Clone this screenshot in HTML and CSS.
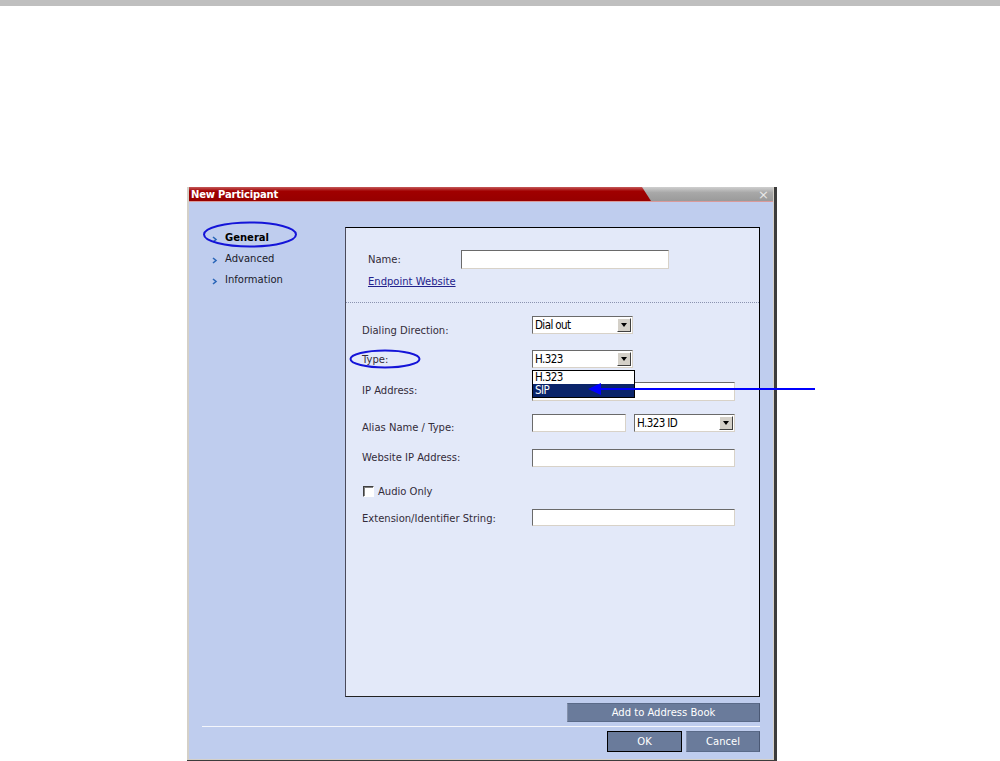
FILE: index.html
```html
<!DOCTYPE html>
<html lang="en">
<head>
  <meta charset="UTF-8" />
  <title>New Participant</title>
  <link rel="stylesheet" href="styles.css">
</head>
<body>
  <div class="barra-top"></div>

  <div class="dialogo">
    <div class="ventana">
      <div class="titulo">
        <div class="titulo-rojo">New Participant</div>
        <div class="titulo-gris"><span class="cerrar">×</span></div>
      </div>

      <div class="contenido">
        <div class="principal">
          <ul class="nav">
            <li class="activo"><span class="chev"></span>General</li>
            <li><span class="chev"></span>Advanced</li>
            <li><span class="chev"></span>Information</li>
          </ul>

          <div class="panel">
            <div class="seccion-nombre">
              <div class="fila-nombre">
                <label class="lbl-nombre">Name:</label>
                <div class="campo campo-nombre"></div>
              </div>
              <a class="enlace" href="#">Endpoint Website</a>
            </div>

            <div class="separador"></div>

            <div class="form">
              <div class="fila f-dial">
                <label>Dialing Direction:</label>
                <div class="combo"><span>Dial out</span><i class="flecha"></i></div>
              </div>
              <div class="fila f-type">
                <label>Type:</label>
                <div class="combo"><span>H.323</span><i class="flecha"></i>
                  <div class="lista">
                    <div class="opcion">H.323</div>
                    <div class="opcion sel">SIP</div>
                  </div>
                </div>
              </div>
              <div class="fila f-ip">
                <label>IP Address:</label>
                <div class="campo campo-largo"></div>
              </div>
              <div class="fila f-alias">
                <label>Alias Name / Type:</label>
                <div class="campo campo-alias"></div>
                <div class="combo combo-alias"><span>H.323 ID</span><i class="flecha"></i></div>
              </div>
              <div class="fila f-web">
                <label>Website IP Address:</label>
                <div class="campo campo-largo"></div>
              </div>
              <div class="fila f-audio">
                <span class="check"></span>
                <span>Audio Only</span>
              </div>
              <div class="fila f-ext">
                <label>Extension/Identifier String:</label>
                <div class="campo campo-largo campo-ext"></div>
              </div>
            </div>
          </div>
        </div>

        <div class="fila-add">
          <button class="btn btn-add">Add to Address Book</button>
        </div>
        <div class="linea"></div>
        <div class="fila-botones">
          <button class="btn btn-ok">OK</button>
          <button class="btn btn-cancel">Cancel</button>
        </div>
      </div>
    </div>
  </div>

  <!-- anotaciones -->
  <svg class="anot" width="1000" height="761" viewBox="0 0 1000 761">
    <ellipse cx="250" cy="234.5" rx="46" ry="12" fill="none" stroke="#1414d8" stroke-width="2"/>
    <ellipse cx="385" cy="359" rx="34.5" ry="8.5" fill="none" stroke="#1414d8" stroke-width="2"/>
    <line x1="598" y1="389" x2="815" y2="389" stroke="#0000ff" stroke-width="2"/>
    <polygon points="588,389 601,383 601,395" fill="#0000ff"/>
  </svg>
</body>
</html>
```

FILE: styles.css
```css
* {
  box-sizing: border-box;
  margin: 0;
  padding: 0;
}

body {
  background: #fff;
  font-family: "DejaVu Sans", Verdana, sans-serif;
  font-size: 10px;
  color: #332c3a;
  overflow: hidden;
}

.barra-top {
  height: 6px;
  background: #bfbfbf;
}

.dialogo {
  margin: 181px 0 0 187px;
  width: 590px;
  height: 576px;
  border-right: 3px solid #3c3c3c;
  border-bottom: 3px solid #3c3c3c;
}

.ventana {
  height: 100%;
  display: flex;
  flex-direction: column;
  background: #bfcdee;
  border-left: 2px solid #d4d0c8;
  border-right: 1px solid #d4d0c8;
  border-bottom: 1px solid #d4d0c8;
}

/* barra de titulo */
.titulo {
  display: flex;
  height: 15px;
  background: linear-gradient(#cfcfcf, #a8a8a8 40%, #9a9a9a);
  border-bottom: 1px solid #d99a9a;
}

.titulo-rojo {
  width: 462px;
  background: linear-gradient(#c55a5a, #a00000 30%, #960000);
  clip-path: polygon(0 0, 453px 0, 100% 100%, 0 100%);
  color: #fff;
  font-weight: bold;
  font-size: 10px;
  line-height: 16px;
  padding-left: 2px;
  letter-spacing: -0.2px;
}

.titulo-gris {
  flex: 1;
  display: flex;
  justify-content: flex-end;
}

.cerrar {
  color: #e8e8e8;
  font-size: 13px;
  line-height: 15px;
  padding-right: 4px;
}

/* contenido */
.contenido {
  flex: 1;
  display: flex;
  flex-direction: column;
  padding-top: 25px;
}

.principal {
  display: flex;
  height: 470px;
}

.nav {
  list-style: none;
  width: 156px;
  padding-left: 23px;
}

.nav li {
  line-height: 21px;
  display: flex;
  align-items: center;
  color: #1a1a2a;
}

.nav li.activo {
  font-weight: bold;
  color: #000;
}

.chev {
  width: 13px;
  height: 21px;
  background: url("data:image/svg+xml;utf8,<svg xmlns='http://www.w3.org/2000/svg' width='6' height='7'><path d='M1 1 L4 3.5 L1 6' fill='none' stroke='%232a66b8' stroke-width='1.6'/></svg>") no-repeat 0 9px;
}

.panel {
  width: 415px;
  background: #e3e9f9;
  border: 1px solid #000;
  border-left-color: #4a4a5a;
  border-bottom-color: #222;
}

.seccion-nombre {
  padding: 22px 0 0 22px;
}

.fila-nombre {
  display: flex;
  align-items: center;
  height: 19px;
}

.lbl-nombre {
  width: 93px;
}

.enlace {
  display: block;
  margin-top: 7px;
  line-height: 12px;
  color: #23238c;
}

.separador {
  margin-top: 14px;
  border-top: 1px dotted #8a93b0;
}

/* campos */
.campo {
  height: 19px;
  background: #fff;
  border: 1px solid #d8d2c8;
  border-top-color: #6a6a6a;
  border-left-color: #6a6a6a;
}

.campo-nombre {
  width: 208px;
}

.campo-largo {
  width: 203px;
}

.campo-alias {
  width: 94px;
  height: 18px;
  margin-right: 8px;
}

.campo-ext {
  height: 17px;
}

.combo {
  position: relative;
  width: 101px;
  height: 18px;
  background: #fff;
  border: 1px solid #d8d2c8;
  border-top-color: #6a6a6a;
  border-left-color: #6a6a6a;
  display: flex;
  align-items: center;
  font-family: "Liberation Sans Narrow", "DejaVu Sans Condensed", "Liberation Sans", sans-serif;
  font-stretch: condensed;
  font-size: 11.5px;
  color: #000;
}

.combo span {
  padding-left: 2px;
  flex: 1;
  letter-spacing: -0.6px;
}

.flecha {
  width: 14px;
  height: 14px;
  margin-right: 1px;
  background: #d4d0c8;
  border: 1px solid;
  border-color: #fff #404040 #404040 #fff;
  display: flex;
  align-items: center;
  justify-content: center;
}

.flecha::after {
  content: "";
  border-left: 3.5px solid transparent;
  border-right: 3.5px solid transparent;
  border-top: 4px solid #000;
}

.lista {
  position: absolute;
  top: 19px;
  left: -1px;
  width: 103px;
  height: 28px;
  background: #fff;
  border: 1px solid #000;
  z-index: 5;
}

.opcion {
  height: 13px;
  line-height: 13px;
  padding-left: 2px;
  letter-spacing: -0.6px;
}

.opcion.sel {
  background: #0a246a;
  color: #fff;
}

/* formulario */
.form {
  padding-left: 16px;
}

.fila {
  display: flex;
  align-items: flex-start;
}

.fila label {
  width: 170px;
  line-height: 12px;
}

.f-dial { margin-top: 13px; }
.f-dial label { padding-top: 9px; }

.f-type { margin-top: 13px; }
.f-type label { padding-top: 4px; }

.f-ip { margin-top: 14px; }
.f-ip label { padding-top: 3px; }

.f-alias { margin-top: 13px; }
.f-alias label { padding-top: 8px; }

.f-web { margin-top: 15px; }
.f-web label { padding-top: 3px; }
.f-web .campo { height: 18px; }

.f-audio {
  margin-top: 19px;
  align-items: center;
  height: 11px;
  padding-left: 1px;
}

.check {
  width: 11px;
  height: 11px;
  background: #fff;
  border: 1px solid #fff;
  border-top-color: #404040;
  border-left-color: #404040;
  box-shadow: inset 1px 1px 0 #808080;
  margin-right: 4px;
}

.f-ext { margin-top: 12px; }
.f-ext label { padding-top: 4px; }

.combo-alias {
  width: 101px;
}

/* botones */
.fila-add {
  display: flex;
  justify-content: flex-end;
  margin-top: 6px;
  padding-right: 13px;
}

.btn {
  font-family: "DejaVu Sans", Verdana, sans-serif;
  font-size: 10px;
  color: #fff;
  background: #6a7b9b;
  border: 1px solid #5a6a88;
  border-left-color: #8592ac;
  border-right-color: #4a5874;
  cursor: pointer;
}

.btn-add {
  width: 193px;
  height: 19px;
}

.linea {
  margin: 4px 13px 0 13px;
  height: 1px;
  background: #f4f6fc;
}

.fila-botones {
  display: flex;
  justify-content: flex-end;
  gap: 4px;
  margin-top: 4px;
  padding-right: 13px;
}

.btn-ok {
  width: 75px;
  height: 21px;
  border: 1px solid #000;
}

.btn-cancel {
  width: 74px;
  height: 21px;
}

.anot {
  position: absolute;
  top: 0;
  left: 0;
  z-index: 10;
  pointer-events: none;
}
```
